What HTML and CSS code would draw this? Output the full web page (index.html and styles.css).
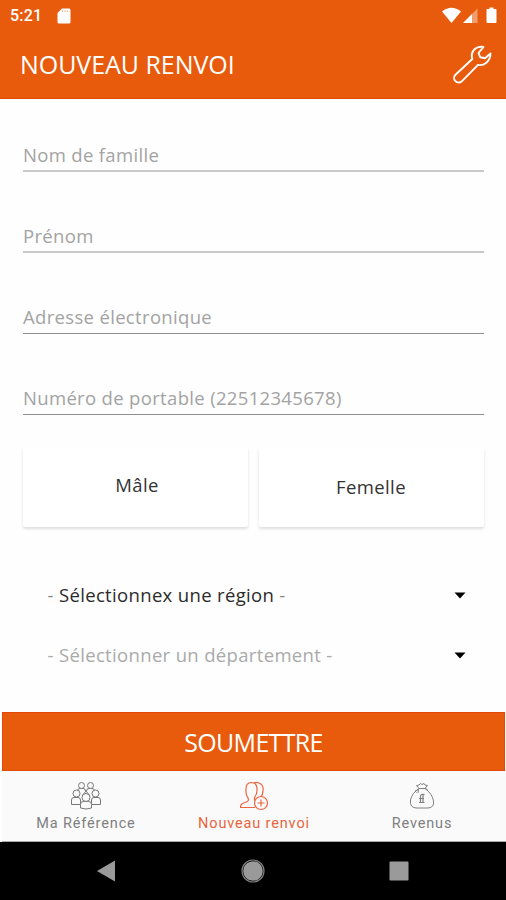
FILE: index.html
```html
<!DOCTYPE html>
<html lang="fr">
<head>
<meta charset="utf-8">
<title>Nouveau renvoi</title>
<link rel="stylesheet" href="styles.css">
</head>
<body>
<div class="screen">
  <header class="header">
    <div class="status">
      <span class="clock">5:21</span>
      <svg class="sd" width="14" height="16" viewBox="0 0 14 16"><path fill="#fff" d="M5 0.5H12Q13.5 0.5 13.5 2V14Q13.5 15.5 12 15.5H2Q0.5 15.5 0.5 14V5Z"/><path stroke="#e85b0c" stroke-opacity=".5" stroke-width="1.2" d="M5.5 2.500V4M8 2.500V4M10.500 2.500V4"/></svg>
      <svg class="signals" width="56" height="17" viewBox="0 0 56 17"><path fill="#fff" d="M0 4.5Q9.5 -3 19 4.5L9.5 16Z"/><path fill="#fff" fill-opacity=".4" d="M21 16L35.500 1.500V16Z"/><path fill="#fff" d="M21 16L30 7V16Z"/><path fill="#fff" d="M45.500 2H47.500V.5H51.500V2H53.500Q54.500 2 54.500 3V15Q54.500 16 53.500 16H45.500Q44.500 16 44.500 15V3Q44.500 2 45.500 2Z"/></svg>
    </div>
    <div class="titlebar">
      <h1 class="title">NOUVEAU RENVOI</h1>
      <svg class="wrench" width="40" height="40" viewBox="0 0 40 40"><path fill="none" stroke="#fff" stroke-width="1.9" stroke-linejoin="round" stroke-linecap="round" d="M31.500 2C26 .8 20.500 4 19.800 9.500Q19.600 12 20.300 14L3.500 29.800A4.300 4.300 0 0 0 9.800 36.300L26 19.800C31.500 21.300 38.500 16.500 38.500 8.500L33 13.300L28.300 12.300L26.500 8Z"/></svg>
    </div>
  </header>

  <main class="form">
    <div class="field light"><span class="hint">Nom de famille</span></div>
    <div class="field light"><span class="hint">Prénom</span></div>
    <div class="field"><span class="hint">Adresse électronique</span></div>
    <div class="field"><span class="hint">Numéro de portable (22512345678)</span></div>
    <div class="choices">
      <div class="choice male">Mâle</div>
      <div class="choice female">Femelle</div>
    </div>
    <div class="selects">
      <div class="select"><span class="region"><i>-</i> Sélectionnex une région <i>-</i></span><svg width="12" height="7" viewBox="0 0 12 7"><path d="M.5 .5H11.500L6 6.500Z"/></svg></div>
      <div class="select"><span class="dept">- Sélectionner un département -</span><svg width="12" height="7" viewBox="0 0 12 7"><path d="M.5 .5H11.500L6 6.500Z"/></svg></div>
    </div>
  </main>

  <div class="submit">SOUMETTRE</div>

  <nav class="tabs">
    <div class="tab">
      <svg width="32" height="30" viewBox="0 0 32 30"><g fill="#fafafa" stroke="#777" stroke-width="1"><path d="M7.500 14V10Q7.500 7.500 10 7.500H13Q15.500 7.500 15.500 10V14M16.500 14V10Q16.500 7.500 19 7.500H22Q24.500 7.500 24.500 10V14"/><circle cx="11.500" cy="4.500" r="3"/><circle cx="20.500" cy="4.500" r="3"/><path d="M1.500 23.500V19Q1.500 16.500 4 16.500H8Q10.500 16.500 10.500 19V23.500ZM21.500 23.500V19Q21.500 16.500 24 16.500H28Q30.500 16.500 30.500 19V23.500Z"/><circle cx="6.500" cy="12.500" r="3.500"/><circle cx="25.500" cy="12.500" r="3.500"/><path d="M12 15L16 10L20 15"/><path d="M10.500 27V23.500Q10.500 20.500 13.500 20.500H18.500Q21.500 20.500 21.500 23.500V27Q16 29 10.500 27Z"/><circle cx="16" cy="16.500" r="4"/></g></svg>
      <span>Ma Référence</span>
    </div>
    <div class="tab active">
      <svg width="32" height="30" viewBox="0 0 32 30"><g fill="none" stroke="#ec6640" stroke-width="1.200" stroke-linejoin="round"><path d="M17 26.500H2.500Q2.500 23 5 22.200L9.500 20.500Q11 19.500 10 17Q7.500 14 8 9Q7.500 2 13 1.500Q18.500 1.500 19 7Q19.500 13 16.500 16.500Q16 19 17.500 20.500M15.500 2Q18 .8 21 2Q25.800 4 25 9Q25 14 22.500 16.500"/><circle cx="23" cy="22" r="6.500" fill="#fafafa"/><path d="M19.500 22H26.500M23 18.500V25.500"/></g></svg>
      <span>Nouveau renvoi</span>
    </div>
    <div class="tab">
      <svg width="32" height="30" viewBox="0 0 32 30"><g fill="none" stroke="#808080" stroke-width="1" stroke-linejoin="round"><path d="M13 7.500Q6 12 4.500 19Q3.500 26.500 10 27H22Q28.500 26.500 27.500 20Q26.500 13 19 7.500Z"/><path d="M13 7.500L10.500 4.500L13 4L14.500 2.500L16 3.500L18 2.500L19 4L21.500 4.500L19 7.500"/><path d="M12.500 8.500L9 10L10.500 11.500M12.500 8.500L12 12M19 7.500L21.500 8.500"/><path stroke-width="1.200" d="M18.500 13.500Q14.500 12.500 14.500 15.500V21.500M13 17.500H18M13 21.500H18.500M17 13.500V21.500"/></g></svg>
      <span>Revenus</span>
    </div>
  </nav>

  <footer class="navbar">
    <svg width="20" height="22" viewBox="0 0 20 22"><path fill="#9a9a9a" d="M1 11L19 .5V21.500Z"/></svg>
    <svg width="26" height="26" viewBox="0 0 26 26"><circle cx="13" cy="13" r="11" fill="none" stroke="#808080" stroke-width="1.200"/><circle cx="13" cy="13" r="9.800" fill="#9a9a9a"/></svg>
    <svg width="20" height="20" viewBox="0 0 20 20"><rect x=".5" y=".5" width="19" height="19" rx="1" fill="#9a9a9a"/></svg>
  </footer>
</div>
</body>
</html>
```
FILE: styles.css
```css
* { box-sizing: border-box; }
body { margin: 0; background: #fefefe; font-family: "Open Sans", sans-serif; }
svg { display: block; flex: none; }
.screen { width: 506px; height: 900px; display: flex; flex-direction: column; overflow: hidden; white-space: nowrap; }

.header { height: 99px; background: #e85b0c; color: #fff; border-bottom: 1px solid #e2480a; flex: none; }
.status { height: 32px; display: flex; align-items: center; padding: 0 8px 0 10px; }
.clock { font: 500 16px/20px Roboto, sans-serif; width: 47px; letter-spacing: 0.2px; }
.sd { margin-top: -1px; }
.signals { margin: -1px 0 0 auto; }
.titlebar { height: 66px; display: flex; align-items: center; justify-content: space-between; padding: 0 14px 0 20px; }
.title { margin: -2px 0 0; font-size: 25px; font-weight: 400; line-height: 34px; letter-spacing: -0.05px; }
.wrench { margin-top: -1px; }

.form { flex: none; height: 613px; padding: 0 22px 0 23px; }
.field { height: 81px; display: flex; flex-direction: column; justify-content: flex-end; border-bottom: 1px solid #8f8f8f; padding-bottom: 3px; }
.field.light { border-bottom: 2px solid #c8c8c8; padding-bottom: 2px; }
.field:first-child { height: 73px; }
.hint { color: #a3a3a3; font-size: 18.5px; line-height: 26px; letter-spacing: 0.33px; }

.choices { display: grid; grid-template-columns: 225px 225px; gap: 11px; margin-top: 32px; }
.choice { height: 80px; display: flex; align-items: center; justify-content: center; font-size: 18.5px; letter-spacing: 0.4px; color: #333; background: #fff; border-radius: 2px; box-shadow: 0 2px 3px rgba(0, 0, 0, .13); }
.male { padding-bottom: 5px; padding-left: 3px; }
.female { padding-bottom: 1px; padding-right: 1px; }

.selects { margin-top: 38px; padding: 0 18px 0 24.5px; }
.select { height: 60px; display: flex; align-items: center; justify-content: space-between; font-size: 18.5px; letter-spacing: 0.34px; }
.select span { margin-top: -2px; }
.region { color: #2b2b2b; }
.region i { font-style: normal; color: #888; }
.dept { color: #aaa; }

.submit { flex: none; height: 59px; margin: 0 1px 0 2px; background: #e85b0c; border: 1px solid #e2480a; color: #fff; font-size: 25px; letter-spacing: -0.7px; display: flex; align-items: center; justify-content: center; }

.tabs { flex: none; height: 71px; margin-left: 2px; background: #fafafa; border-bottom: 1px solid #aaa; display: grid; grid-template-columns: repeat(3, 1fr); font-family: Roboto, sans-serif; font-size: 14.5px; color: #808080; letter-spacing: 0.85px; }
.tab { display: flex; flex-direction: column; align-items: center; padding-top: 10px; line-height: 26px; }
.tab svg { margin-left: -1px; }
.active { color: #e9643c; }

.navbar { flex: 1; background: #000; display: flex; align-items: center; justify-content: space-between; padding: 0 97px 0 96px; }
```
